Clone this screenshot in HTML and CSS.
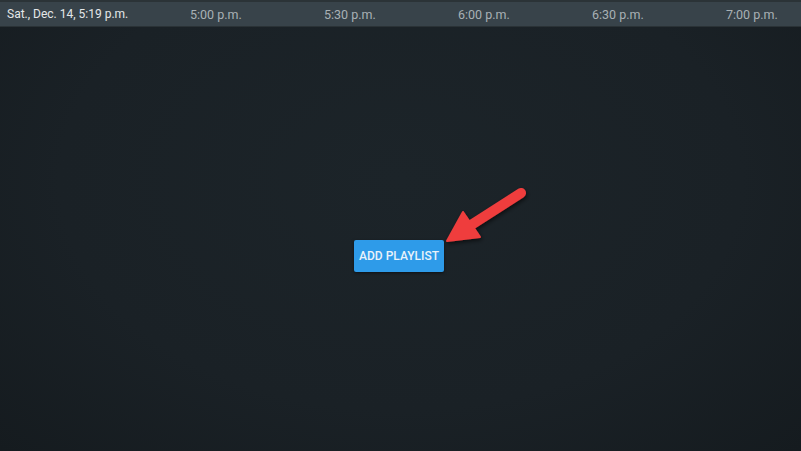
FILE: index.html
```html
<!DOCTYPE html>
<html>
<head>
<meta charset="utf-8">
<link rel="stylesheet" href="styles.css">
</head>
<body>
<div class="app">
  <header class="timebar">
    <span class="now">Sat., Dec. 14, 5:19 p.m.</span>
    <span class="slot">5:00 p.m.</span>
    <span class="slot">5:30 p.m.</span>
    <span class="slot">6:00 p.m.</span>
    <span class="slot">6:30 p.m.</span>
    <span class="slot">7:00 p.m.</span>
  </header>
  <main class="stage">
    <button class="add-btn">ADD PLAYLIST</button>
  </main>
  <svg class="arrow" width="801" height="451" viewBox="0 0 801 451">
    <defs>
      <filter id="sh" x="-20%" y="-20%" width="140%" height="140%">
        <feDropShadow dx="1" dy="2" stdDeviation="2" flood-color="#000" flood-opacity="0.6"/>
      </filter>
    </defs>
    <g filter="url(#sh)" fill="#ef3e3e" stroke="#ef3e3e">
      <line x1="521" y1="193" x2="468" y2="227" stroke-width="10" stroke-linecap="round"/>
      <polygon points="447,241 463,212 480,237" stroke-width="2" stroke-linejoin="round"/>
    </g>
  </svg>
</div>
</body>
</html>
```
FILE: styles.css
```css
html, body {
  margin: 0;
  padding: 0;
}
body {
  width: 801px;
  height: 451px;
  overflow: hidden;
  background: #1a2126;
  font-family: Roboto, "Liberation Sans", sans-serif;
}
.app {
  position: relative;
  width: 801px;
  height: 451px;
  display: flex;
  flex-direction: column;
  background: radial-gradient(ellipse at 50% 40%, #1c2429 0%, #1a2126 60%, #151b1f 100%);
}
.timebar {
  height: 24px;
  border-top: 2px solid #2b3337;
  border-bottom: 1px solid #2a3236;
  background: #38434a;
  display: grid;
  grid-template-columns: 183px repeat(4, 134px) 1fr;
  align-items: center;
  padding-left: 7px;
  font-size: 12.5px;
  color: #a9b1b5;
  white-space: nowrap;
}
.now {
  color: #e4e7e8;
  font-size: 12px;
}
.stage {
  flex: 1;
  display: flex;
  align-items: center;
  justify-content: center;
  padding-top: 34px;
  padding-right: 3px;
}
.add-btn {
  width: 90px;
  height: 32px;
  border: none;
  border-radius: 2px;
  background: #2e9be9;
  color: #e9f2fa;
  font-family: Roboto, "Liberation Sans", sans-serif;
  font-weight: 500;
  font-size: 12px;
  padding: 0;
  box-shadow: 0 1px 3px rgba(0,0,0,0.5);
}
.arrow {
  position: absolute;
  left: 0;
  top: 0;
  pointer-events: none;
}
```
